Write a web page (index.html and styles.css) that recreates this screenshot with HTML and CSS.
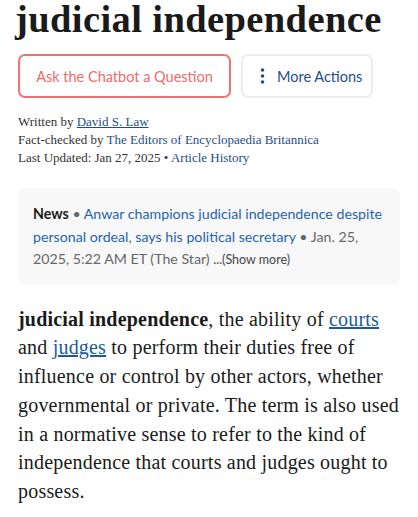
FILE: index.html
```html
<!DOCTYPE html>
<html lang="en">
<head>
<meta charset="utf-8">
<title>judicial independence</title>
<link rel="stylesheet" href="styles.css">
</head>
<body>
<main class="page">
  <h1 class="title">judicial independence</h1>
  <div class="actions">
    <button class="btn btn-chat">Ask the Chatbot a Question</button>
    <button class="btn btn-more">
      <svg class="dots" width="5" height="16" viewBox="0 0 5 16" aria-hidden="true">
        <circle cx="2.5" cy="2" r="1.8"/>
        <circle cx="2.5" cy="8" r="1.8"/>
        <circle cx="2.5" cy="14" r="1.8"/>
      </svg>
      <span>More Actions</span>
    </button>
  </div>
  <div class="meta">
    <div>Written by <a class="ul" href="#">David S. Law</a></div>
    <div>Fact-checked by <a href="#">The Editors of Encyclopaedia Britannica</a></div>
    <div>Last Updated: Jan 27, 2025 • <a href="#">Article History</a></div>
  </div>
  <div class="news">
    <b class="news-label">News</b> <span class="grey">•</span> <a href="#">Anwar champions judicial independence despite personal ordeal, says his political secretary</a> <span class="grey">• Jan. 25, 2025, 5:22 AM ET (The Star)</span> <span class="more">...(Show more)</span>
  </div>
  <p class="lead"><strong>judicial independence</strong>, the ability of <a href="#">courts</a> and <a href="#">judges</a> to perform their duties free of influence or control by other actors, whether governmental or private. The term is also used in a normative sense to refer to the kind of independence that courts and judges ought to possess.</p>
</main>
</body>
</html>
```
FILE: styles.css
```css
html, body {
  margin: 0;
  padding: 0;
  background: #fff;
}
.page {
  padding: 0 18px;
  font-family: "Liberation Serif", Georgia, serif;
  color: #1a1a1a;
}
.title {
  margin: 0;
  font-size: 38.5px;
  line-height: 38px;
  font-weight: 700;
  letter-spacing: 0.4px;
  color: #1a1a1a;
  margin-left: -3px;
  white-space: nowrap;
}
.actions {
  display: flex;
  gap: 10px;
  margin-top: 16px;
}
.btn {
  box-sizing: border-box;
  height: 44px;
  border-radius: 7px;
  background: #fff;
  font-family: Lato, "Liberation Sans", sans-serif;
  font-size: 14.5px;
  padding: 0;
  display: flex;
  align-items: center;
  white-space: nowrap;
  cursor: pointer;
}
.btn-chat {
  width: 213px;
  justify-content: center;
  border: 2px solid #f07373;
  color: #f06b6b;
}
.btn-more {
  width: 132px;
  border: 2px solid #ededed;
  color: #1f4b8f;
  gap: 12px;
  padding-left: 17px;
}
.dots {
  flex-shrink: 0;
  fill: #1f4b8f;
}
.meta {
  margin-top: 15px;
  font-size: 13px;
  line-height: 18px;
  color: #333;
}
.meta a {
  color: #1b4f8c;
  text-decoration: none;
}
.meta a.ul {
  text-decoration: underline;
}
.news {
  margin-top: 21px;
  background: #f8f8f8;
  border-radius: 8px;
  padding: 15px 14px 13px 15px;
  font-family: Lato, "Liberation Sans", sans-serif;
  font-size: 14.2px;
  line-height: 22.5px;
  color: #666;
}
.news-label {
  color: #1a1a1a;
}
.news a {
  color: #1d63b0;
  text-decoration: none;
}
.grey {
  color: #666;
}
.more {
  font-size: 12.5px;
  color: #444;
}
.lead {
  margin: 20px -6px 0 0;
  font-size: 20px;
  line-height: 28.8px;
  letter-spacing: 0.2px;
  color: #1a1a1a;
}
.lead a {
  color: #1a5a9e;
  text-decoration: underline;
}
```
